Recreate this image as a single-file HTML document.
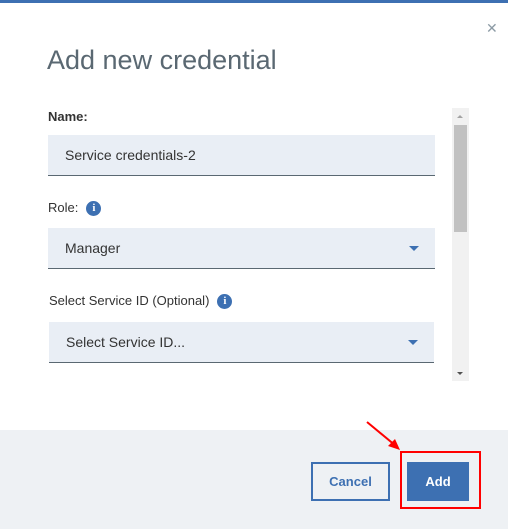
<!DOCTYPE html>
<html><head><style>
body{margin:0;width:508px;height:529px;background:#fff;font-family:"Liberation Sans",sans-serif;position:relative;overflow:hidden}
.a{position:absolute}
.lbl{font-size:13px;color:#333}
.box{background:#e9eef5;border-bottom:1px solid #5a6872;font-size:14px;color:#333;box-sizing:border-box;padding-left:17px;display:flex;align-items:center}
.info{display:inline-block;width:15px;height:15px;border-radius:50%;background:#3d70b2;color:#fff;font-size:11px;font-weight:bold;text-align:center;line-height:15px;font-family:"Liberation Serif",serif;vertical-align:middle;margin-left:8px}
.caret{position:absolute;right:16px;top:18px;width:0;height:0;border-left:5px solid transparent;border-right:5px solid transparent;border-top:5px solid #3d70b2}
</style></head><body>
<div class="a" style="left:0;top:0;width:508px;height:3px;background:#3d70b2"></div>
<div class="a" style="left:486px;top:20px;font-size:14px;color:#8c9ba5">✕</div>
<div class="a" style="left:47px;top:45px;font-size:27px;color:#5a6872;font-weight:300">Add new credential</div>
<div class="a lbl" style="left:48px;top:109px;font-weight:bold">Name:</div>
<div class="a box" style="left:48px;top:135px;width:387px;height:41px">Service credentials-2</div>
<div class="a lbl" style="left:48px;top:200px">Role:<span class="info">i</span></div>
<div class="a box" style="left:48px;top:228px;width:387px;height:41px">Manager<div class="caret"></div></div>
<div class="a lbl" style="left:49px;top:293px">Select Service ID (Optional)<span class="info">i</span></div>
<div class="a box" style="left:49px;top:322px;width:385px;height:41px">Select Service ID...<div class="caret"></div></div>
<div class="a" style="left:452px;top:108px;width:17px;height:273px;background:#f1f1f1"></div>
<div class="a" style="left:454px;top:125px;width:13px;height:107px;background:#c1c1c1"></div>
<div class="a" style="left:457px;top:115px;border-left:3px solid transparent;border-right:3px solid transparent;border-bottom:3px solid #a3a3a3"></div>
<div class="a" style="left:457px;top:372px;border-left:3px solid transparent;border-right:3px solid transparent;border-top:3px solid #505050"></div>
<div class="a" style="left:0;top:430px;width:508px;height:99px;background:#eef1f4"></div>
<div class="a" style="left:311px;top:462px;width:79px;height:39px;border:2px solid #3d70b2;box-sizing:border-box;color:#3d70b2;font-weight:bold;font-size:13px;display:flex;align-items:center;justify-content:center">Cancel</div>
<div class="a" style="left:407px;top:462px;width:62px;height:39px;background:#3d70b2;color:#fff;font-weight:bold;font-size:13px;display:flex;align-items:center;justify-content:center">Add</div>
<div class="a" style="left:400px;top:451px;width:81px;height:58px;border:2px solid #f00;box-sizing:border-box"></div>
<svg class="a" style="left:360px;top:415px" width="45" height="40"><line x1="7" y1="7" x2="36" y2="31" stroke="#f00" stroke-width="2"/><polygon points="40,35 28,31 35,24" fill="#f00"/></svg>
</body></html>
